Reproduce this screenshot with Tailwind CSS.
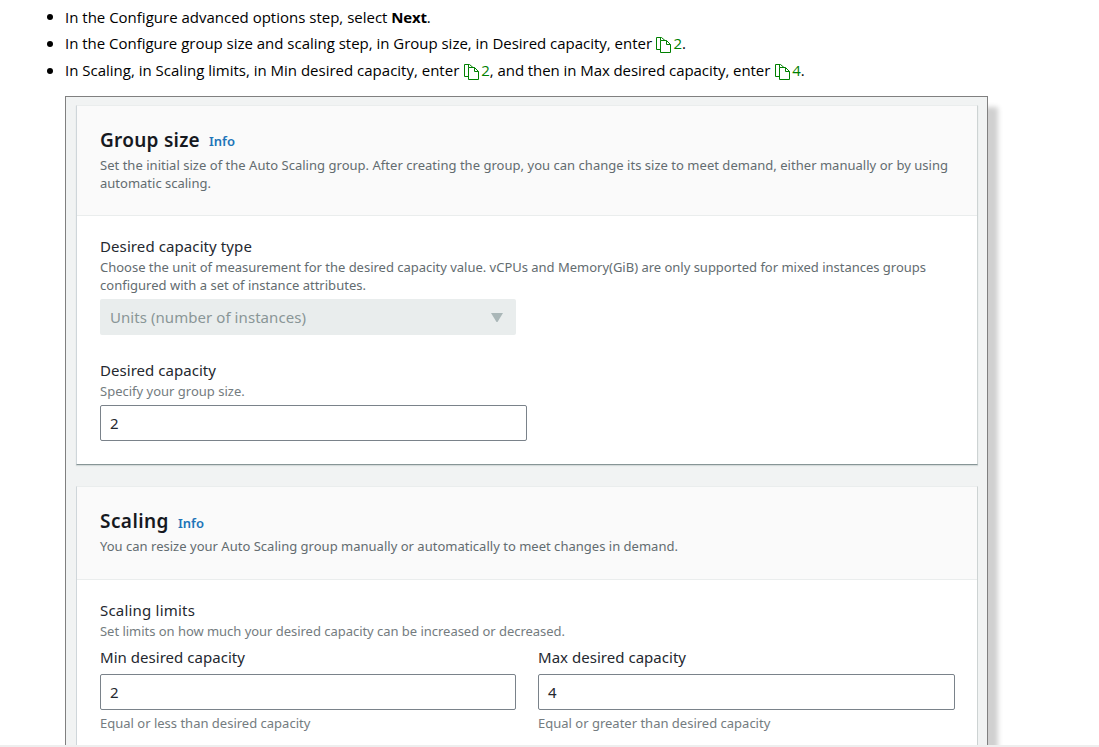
<!DOCTYPE html>
<html lang="en">
<head>
<meta charset="utf-8">
<title>Auto Scaling group</title>
<script src="https://cdn.jsdelivr.net/npm/@tailwindcss/browser@4"></script>
</head>
<body class="h-[747px] overflow-hidden bg-white font-['Open_Sans',sans-serif] text-black">
<svg class="hidden"><symbol id="copy" viewBox="0 0 15 16"><path d="M4.500 12.500H.500V.500H5.500L9 3.500M4.500 .500V3.500M4.500 15.500V3.500H10.500L14.500 7.500V15.500ZM10.500 3.500V7.500H14.500" fill="none" stroke="currentColor"/></symbol></svg>
<main class="h-[745px] overflow-hidden">
<ul class="flex flex-col pt-1 pl-[47px] text-[15px]">
<li class="flex h-[26px] items-center gap-3"><i class="size-[6px] rounded-full bg-black"></i><p class="whitespace-pre">In the Configure advanced options step, select <b class="tracking-[-0.200px]">Next</b>.</p></li>
<li class="flex h-[27px] items-center gap-3"><i class="size-[6px] rounded-full bg-black"></i><p class="flex items-center whitespace-pre"><span class="tracking-[-0.018px]">In the Configure group size and scaling step, in Group size, in Desired capacity, enter</span><svg class="mt-[3px] ml-1 h-4 w-[15px] text-[#008000]"><use href="#copy"/></svg><span class="ml-[2.500px] text-[#008000]">2</span>.</p></li>
<li class="flex h-[27px] items-center gap-3"><i class="size-[6px] rounded-full bg-black"></i><p class="flex items-center whitespace-pre"><span>In Scaling, in Scaling limits, in Min desired capacity, enter</span><svg class="mt-[3px] ml-[5px] h-4 w-[15px] text-[#008000]"><use href="#copy"/></svg><span class="ml-[2px] text-[#008000]">2</span><span class="tracking-[-0.070px]">, and then in Max desired capacity, enter</span><svg class="mt-[3px] ml-[5px] h-4 w-[15px] text-[#008000]"><use href="#copy"/></svg><span class="ml-[2px] text-[#008000]">4</span>.</p></li>
</ul>

<section class="mt-3 ml-[65px] h-[700px] w-[923px] border border-[#808080] bg-[#f1f3f3] pr-[9px] pl-[10px] pt-2 font-['Noto_Sans',sans-serif] text-[13px] leading-[18px] text-[#636c70] shadow-[10px_11px_5px_#d0d0d0]">
  <article class="h-[360px] border border-t-[#eaeded] border-r-[#cdd3d3] border-b-[#879596] border-l-[#cfd6da] bg-white shadow-[0_1px_1px_#d5dbdb]">
    <header class="h-[110px] border-b border-[#eaeded] bg-[#fafafa] pt-5 pl-[23px]">
      <div class="flex h-7 items-center"><h2 class="text-[19px] leading-7 font-semibold tracking-[0.260px] text-[#16191f]">Group size</h2><a class="mt-[2px] ml-[9px] font-semibold text-[#2074b8]">Info</a></div>
      <p class="mt-[2px] whitespace-nowrap"><span class="tracking-[0.026px]">Set the initial size of the Auto Scaling group. After creating the group, you can change its size to meet demand, either manually or by using</span><br>automatic scaling.</p>
    </header>
    <div class="pt-5 pl-[23px]">
      <h3 class="text-[15px] leading-5 tracking-[0.095px] text-[#24282f]">Desired capacity type</h3>
      <p class="mt-0.5 whitespace-nowrap"><span class="tracking-[-0.014px]">Choose the unit of measurement for the desired capacity value. vCPUs and Memory(GiB) are only supported for mixed instances groups</span><br><span class="tracking-[0.016px]">configured with a set of instance attributes.</span></p>
      <div class="mt-[5px] flex h-9 w-[416px] items-center justify-between rounded-xs bg-[#e9eded] pr-[13px] pl-[10px] text-[15px] tracking-[0.061px] text-[#899697]">Units (number of instances)<svg class="h-[9px] w-3" viewBox="0 0 12 9"><path d="M0 0H12L6.500 9H5.500Z" fill="#aab7b8"/></svg></div>
      <h3 class="mt-[25px] text-[15px] leading-5 tracking-[0.041px] text-[#24282f]">Desired capacity</h3>
      <p class="mt-0.5 text-[#747c80]">Specify your group size.</p>
      <div class="mt-[5px] flex h-9 w-[427px] items-center rounded-xs border border-[#7a828a] pl-[9px] text-[15px] text-[#24282f]">2</div>
    </div>
  </article>

  <article class="mt-[21px] h-[360px] border border-t-[#eaeded] border-r-[#cdd3d3] border-b-[#879596] border-l-[#cfd6da] bg-white">
    <header class="h-[93px] border-b border-[#eaeded] bg-[#fafafa] pt-5 pl-[23px]">
      <div class="flex h-7 items-center"><h2 class="text-[19px] leading-7 font-semibold tracking-[0.440px] text-[#16191f]">Scaling</h2><a class="mt-[3px] ml-[9px] font-semibold text-[#2074b8]">Info</a></div>
      <p class="mt-[2px] tracking-[0.014px]">You can resize your Auto Scaling group manually or automatically to meet changes in demand.</p>
    </header>
    <div class="pt-5 pl-[23px]">
      <h3 class="text-[15px] leading-5 tracking-[0.200px] text-[#24282f]">Scaling limits</h3>
      <p class="mt-0.5 tracking-[-0.033px] text-[#747c80]">Set limits on how much your desired capacity can be increased or decreased.</p>
      <div class="mt-[7px] flex gap-[22px]">
        <div class="w-[416px]">
          <h3 class="text-[15px] leading-5 tracking-[0.037px] text-[#24282f]">Min desired capacity</h3>
          <div class="mt-[7px] flex h-9 items-center rounded-xs border border-[#7a828a] pl-[9px] text-[15px] text-[#24282f]">2</div>
          <p class="mt-1 text-[#747c80]">Equal or less than desired capacity</p>
        </div>
        <div class="w-[417px]">
          <h3 class="text-[15px] leading-5 tracking-[0.027px] text-[#24282f]">Max desired capacity</h3>
          <div class="mt-[7px] flex h-9 items-center rounded-xs border border-[#7a828a] pl-[9px] text-[15px] text-[#24282f]">4</div>
          <p class="mt-1 text-[#747c80]">Equal or greater than desired capacity</p>
        </div>
      </div>
    </div>
  </article>
</section>
</main>
<div class="h-0.5 bg-[#eeeeee]"></div>
</body>
</html>
